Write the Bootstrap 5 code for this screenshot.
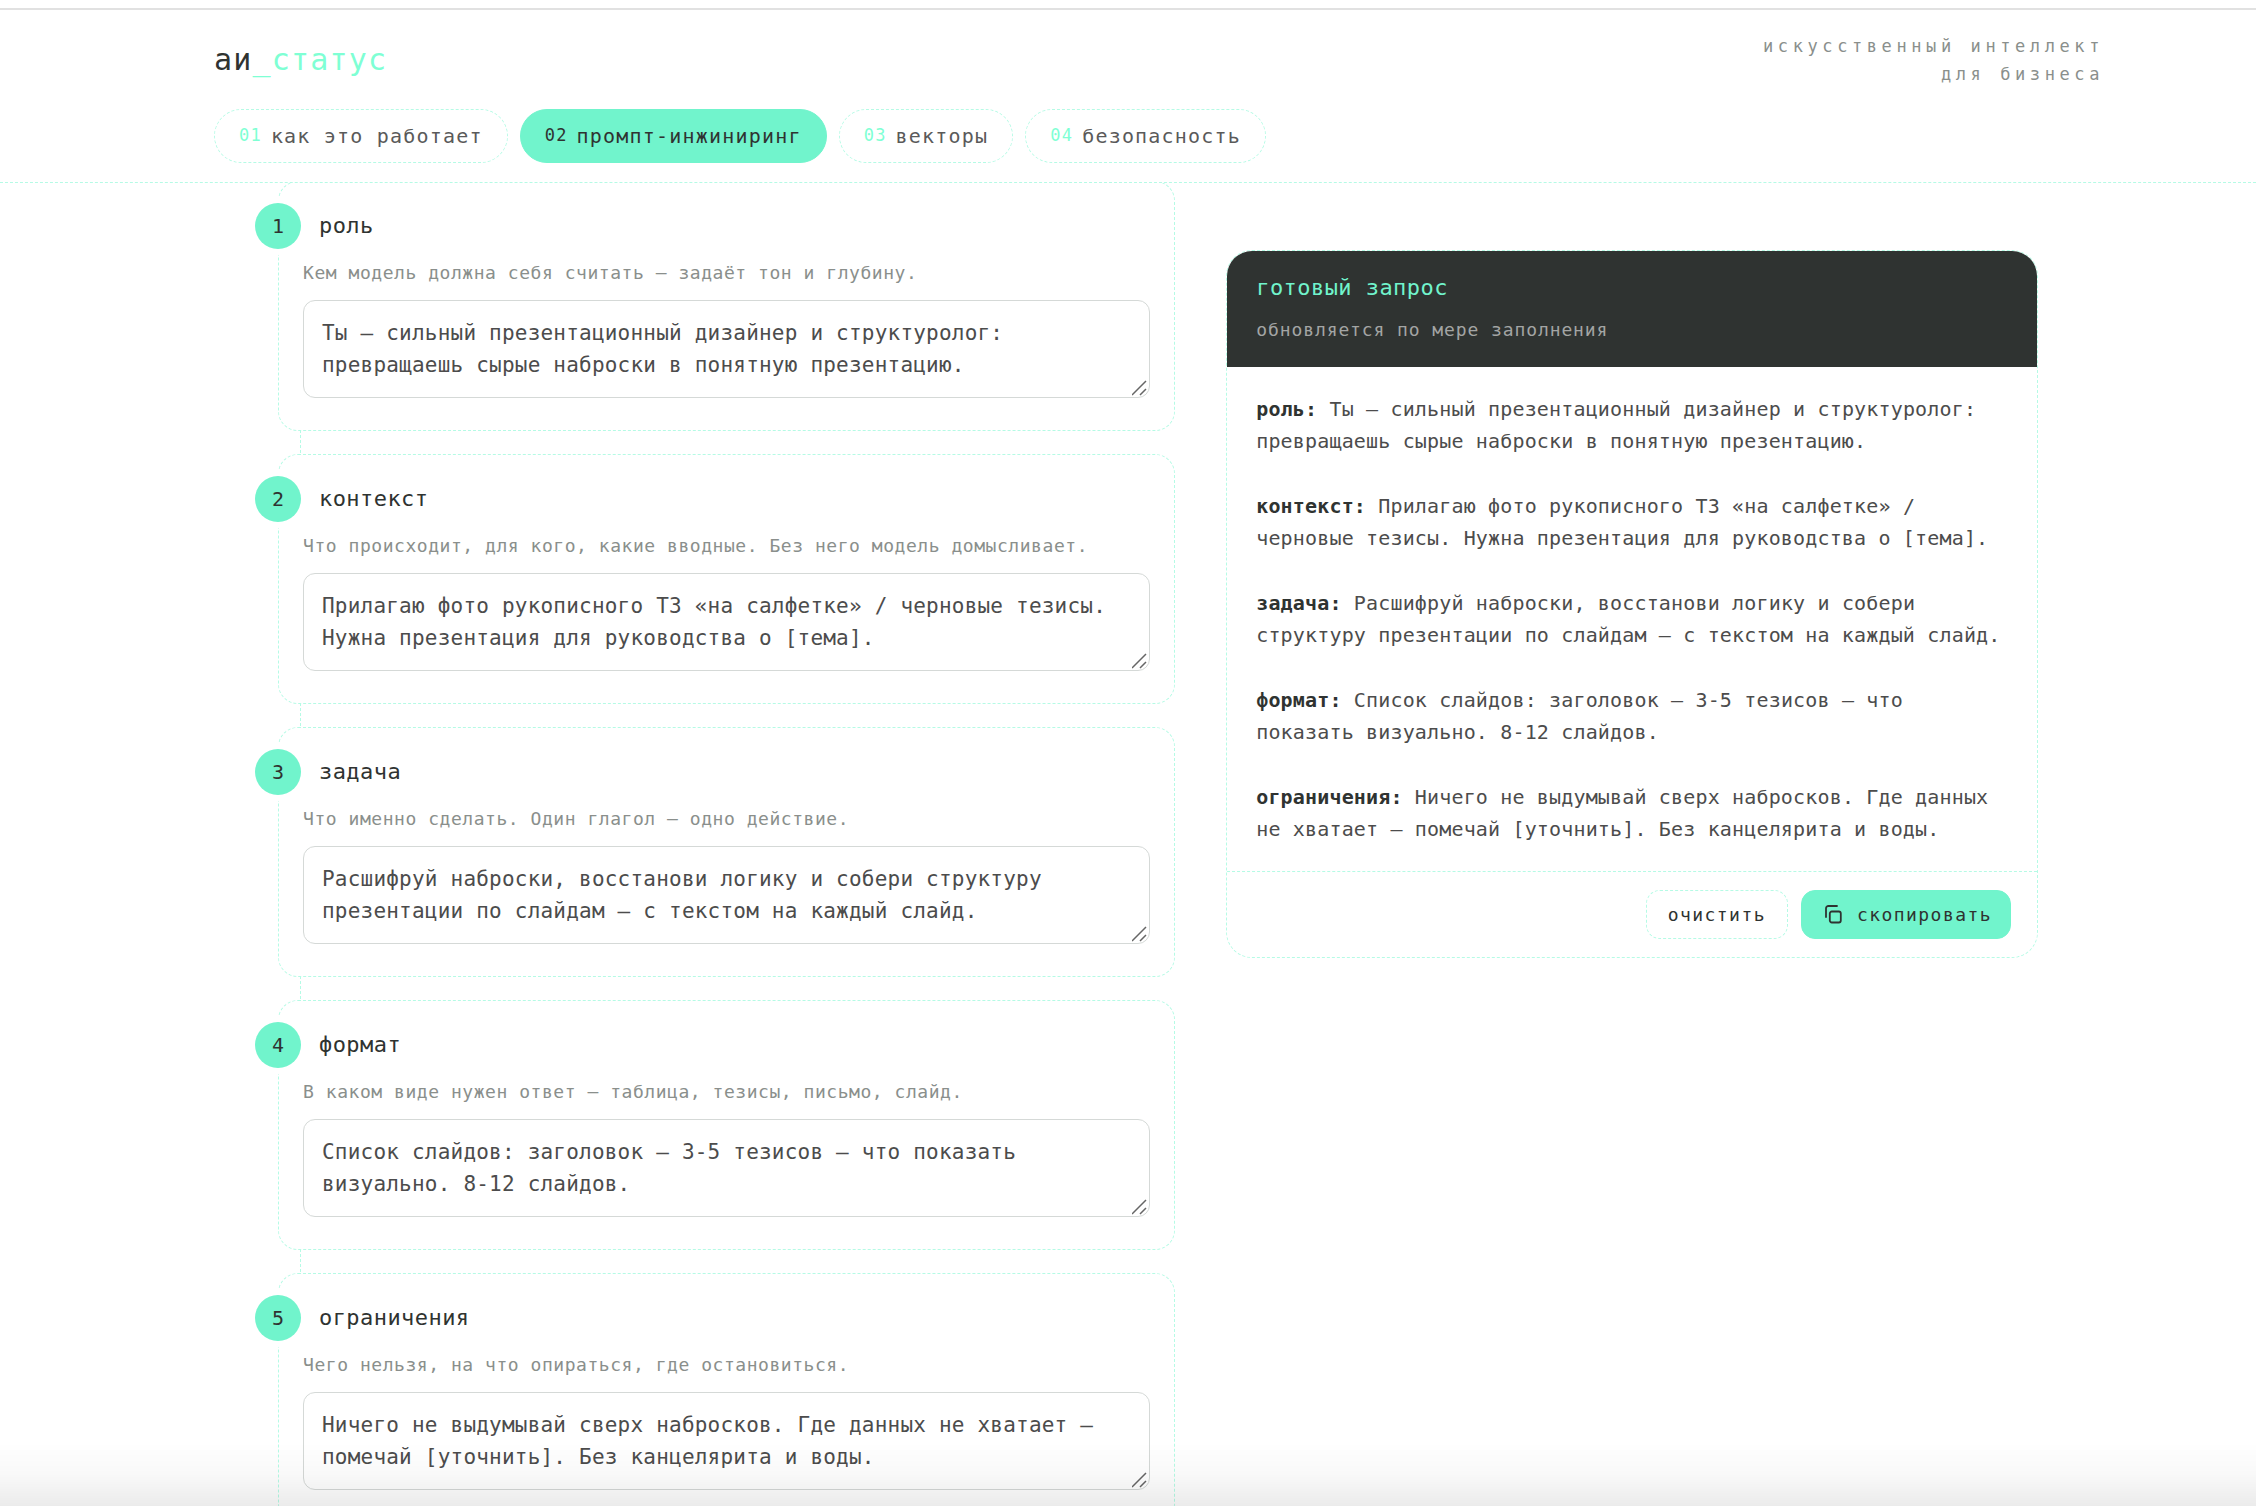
<!DOCTYPE html>
<html lang="ru">
<head>
<meta charset="utf-8">
<meta name="viewport" content="width=device-width, initial-scale=1">
<title>аи_статус — промпт-инжиниринг</title>
<link href="https://cdn.jsdelivr.net/npm/bootstrap@5.3.0/dist/css/bootstrap.min.css" rel="stylesheet">
<style>
:root { --mint: #71f4cc; --mint-text: #7fffd4; --mint-line: #b5fbe5; --ink: #2f3331; --body-ink: #4c4c4c; --muted: #8a8f8c; }
body { font-family: "DejaVu Sans Mono", "Liberation Mono", monospace; letter-spacing: .01em; color: var(--ink); background: #fff; height: 100vh; overflow: hidden; }
.top-rule { margin-top: 8px; height: 2px; background: #e1e1e1; }
.site-head { background: #fff; border-bottom: 1px dashed var(--mint-line); padding: 22px 0 19px 62px; }
.head-inner { max-width: 1890px; }
.brand { font-size: 30px; line-height: 40px; letter-spacing: .04em; color: var(--ink); }
.brand span { color: var(--mint-text); }
.tagline { font-size: 17px; line-height: 28px; letter-spacing: .27em; color: var(--muted); }
.tabs { margin-top: 21px; gap: 12px; }
.tab-link { height: 54px; padding: 0 24px; gap: 9px; border: 1px dashed var(--mint-line); border-radius: 27px; font-size: 20px; letter-spacing: .06em; color: #5a5a5a; }
.tab-link small { font-size: 17px; color: var(--mint-text); }
.tab-link.active { background: var(--mint); border: 1px solid var(--mint); color: var(--ink); }
.tab-link.active small { color: var(--ink); }
main { padding-left: 60px; }
.builder { display: grid; grid-template-columns: 21fr 19fr; column-gap: 51px; max-width: 1760px; align-items: start; }
.steps { margin-top: -2px; gap: 23px; }
.step { border: 1px dashed var(--mint-line); border-radius: 20px; padding: 21px 24px 32px; background: #fff; }
.step:not(:last-child)::after { content: ""; position: absolute; left: 21px; top: 100%; height: 23px; border-left: 1px dashed var(--mint-line); }
.step-head { margin-left: -48px; gap: 18px; }
.step-num { width: 46px; height: 46px; font-size: 20px; background: var(--mint); box-shadow: 0 0 0 6px #fff; }
.head-text { font-size: 22px; line-height: 36px; letter-spacing: .02em; }
.step-hint { margin: 10px 0 13px; font-size: 18px; line-height: 28px; letter-spacing: .03em; color: var(--muted); }
.step textarea.form-control { padding: 16px 18px; font-size: 21px; line-height: 32px; letter-spacing: .01em; color: var(--body-ink); border: 1px solid #d5d9d7; border-radius: 12px; resize: none; overflow: hidden; }
.grip { right: 2px; bottom: 2px; width: 16px; height: 16px; pointer-events: none; }
.result { margin-top: 67px; border: 1px dashed var(--mint-line); border-radius: 26px; overflow: hidden; }
.result-head { background: var(--ink); padding: 19px 29px 23px; }
.result-head h2 { color: var(--mint); font-weight: 400; }
.result-head p { margin-top: 10px; font-size: 18px; line-height: 28px; letter-spacing: .05em; color: #a3a5a4; }
.result-body { padding: 26px 29px; font-size: 20px; line-height: 32px; color: var(--body-ink); }
.result-body p { margin-bottom: 33px; }
.result-body strong { color: var(--ink); }
.result-foot { border-top: 1px dashed var(--mint-line); padding: 18px 26px; gap: 13px; }
.act { height: 49px; padding: 0 21px; border: 1px dashed var(--mint-line); border-radius: 14px; font-size: 18px; line-height: 28px; letter-spacing: .08em; color: var(--ink); }
.act-main { padding: 0 18px 0 23px; gap: 15px; background: var(--mint); border: 1px solid var(--mint); }
.fade-edge { height: 64px; background: linear-gradient(to bottom, rgba(0,0,0,0), rgba(0,0,0,.025) 50%, rgba(0,0,0,.08)); pointer-events: none; }
</style>
<script src="https://cdn.jsdelivr.net/npm/bootstrap@5.3.0/dist/js/bootstrap.bundle.min.js"></script>
</head>
<body>
<div class="top-rule"></div>
<header class="site-head position-relative z-1">
  <div class="head-inner mx-auto">
    <div class="d-flex justify-content-between align-items-center">
      <a class="brand text-decoration-none" href="#">аи<span>_статус</span></a>
      <p class="tagline text-end mb-0">искусственный интеллект<br>для бизнеса</p>
    </div>
    <nav class="tabs d-flex flex-wrap">
      <a class="tab-link d-flex align-items-center text-decoration-none" href="#how"><small>01</small>как это работает</a>
      <a class="tab-link active d-flex align-items-center text-decoration-none" href="#prompt" aria-current="page"><small>02</small>промпт-инжиниринг</a>
      <a class="tab-link d-flex align-items-center text-decoration-none" href="#vectors"><small>03</small>векторы</a>
      <a class="tab-link d-flex align-items-center text-decoration-none" href="#safety"><small>04</small>безопасность</a>
    </nav>
  </div>
</header>

<main>
  <div class="builder mx-auto">
    <div class="steps d-flex flex-column">
      <section class="step position-relative">
        <div class="step-head d-flex align-items-center"><span class="step-num rounded-circle d-flex align-items-center justify-content-center">1</span><label class="head-text" for="f1">роль</label></div>
        <p class="step-hint">Кем модель должна себя считать — задаёт тон и глубину.</p>
        <div class="position-relative">
          <textarea class="form-control" id="f1" rows="2">Ты — сильный презентационный дизайнер и структуролог: превращаешь сырые наброски в понятную презентацию.</textarea>
          <svg class="grip position-absolute" viewBox="0 0 16 16" fill="none" stroke="#666" stroke-width="1.5" aria-hidden="true"><path d="M0 15 14 1M8 15l6-6"/></svg>
        </div>
      </section>
      <section class="step position-relative">
        <div class="step-head d-flex align-items-center"><span class="step-num rounded-circle d-flex align-items-center justify-content-center">2</span><label class="head-text" for="f2">контекст</label></div>
        <p class="step-hint">Что происходит, для кого, какие вводные. Без него модель домысливает.</p>
        <div class="position-relative">
          <textarea class="form-control" id="f2" rows="2">Прилагаю фото рукописного ТЗ «на салфетке» / черновые тезисы. Нужна презентация для руководства о [тема].</textarea>
          <svg class="grip position-absolute" viewBox="0 0 16 16" fill="none" stroke="#666" stroke-width="1.5" aria-hidden="true"><path d="M0 15 14 1M8 15l6-6"/></svg>
        </div>
      </section>
      <section class="step position-relative">
        <div class="step-head d-flex align-items-center"><span class="step-num rounded-circle d-flex align-items-center justify-content-center">3</span><label class="head-text" for="f3">задача</label></div>
        <p class="step-hint">Что именно сделать. Один глагол — одно действие.</p>
        <div class="position-relative">
          <textarea class="form-control" id="f3" rows="2">Расшифруй наброски, восстанови логику и собери структуру презентации по слайдам — с текстом на каждый слайд.</textarea>
          <svg class="grip position-absolute" viewBox="0 0 16 16" fill="none" stroke="#666" stroke-width="1.5" aria-hidden="true"><path d="M0 15 14 1M8 15l6-6"/></svg>
        </div>
      </section>
      <section class="step position-relative">
        <div class="step-head d-flex align-items-center"><span class="step-num rounded-circle d-flex align-items-center justify-content-center">4</span><label class="head-text" for="f4">формат</label></div>
        <p class="step-hint">В каком виде нужен ответ — таблица, тезисы, письмо, слайд.</p>
        <div class="position-relative">
          <textarea class="form-control" id="f4" rows="2">Список слайдов: заголовок — 3-5 тезисов — что показать визуально. 8-12 слайдов.</textarea>
          <svg class="grip position-absolute" viewBox="0 0 16 16" fill="none" stroke="#666" stroke-width="1.5" aria-hidden="true"><path d="M0 15 14 1M8 15l6-6"/></svg>
        </div>
      </section>
      <section class="step position-relative">
        <div class="step-head d-flex align-items-center"><span class="step-num rounded-circle d-flex align-items-center justify-content-center">5</span><label class="head-text" for="f5">ограничения</label></div>
        <p class="step-hint">Чего нельзя, на что опираться, где остановиться.</p>
        <div class="position-relative">
          <textarea class="form-control" id="f5" rows="2">Ничего не выдумывай сверх набросков. Где данных не хватает — помечай [уточнить]. Без канцелярита и воды.</textarea>
          <svg class="grip position-absolute" viewBox="0 0 16 16" fill="none" stroke="#666" stroke-width="1.5" aria-hidden="true"><path d="M0 15 14 1M8 15l6-6"/></svg>
        </div>
      </section>
    </div>

    <aside class="result">
      <div class="result-head">
        <h2 class="head-text mb-0">готовый запрос</h2>
        <p class="mb-0">обновляется по мере заполнения</p>
      </div>
      <div class="result-body">
        <p><strong>роль:</strong> Ты — сильный презентационный дизайнер и структуролог: превращаешь сырые наброски в понятную презентацию.</p>
        <p><strong>контекст:</strong> Прилагаю фото рукописного ТЗ «на салфетке» / черновые тезисы. Нужна презентация для руководства о [тема].</p>
        <p><strong>задача:</strong> Расшифруй наброски, восстанови логику и собери структуру презентации по слайдам — с текстом на каждый слайд.</p>
        <p><strong>формат:</strong> Список слайдов: заголовок — 3-5 тезисов — что показать визуально. 8-12 слайдов.</p>
        <p class="mb-0"><strong>ограничения:</strong> Ничего не выдумывай сверх набросков. Где данных не хватает — помечай [уточнить]. Без канцелярита и воды.</p>
      </div>
      <div class="result-foot d-flex justify-content-end">
        <button class="act btn" type="button">очистить</button>
        <button class="act act-main btn d-flex align-items-center" type="button">
          <svg width="17" height="19" viewBox="0 0 17 19" fill="none" stroke="#2f3331" stroke-width="1.8" stroke-linecap="round" aria-hidden="true"><path d="M12 1H3.500A2.500 2.500 0 0 0 1 3.500V12"/><rect x="4.800" y="6.500" width="11" height="11" rx="2"/></svg>скопировать</button>
      </div>
    </aside>
  </div>
</main>
<div class="fade-edge fixed-bottom"></div>
</body>
</html>
